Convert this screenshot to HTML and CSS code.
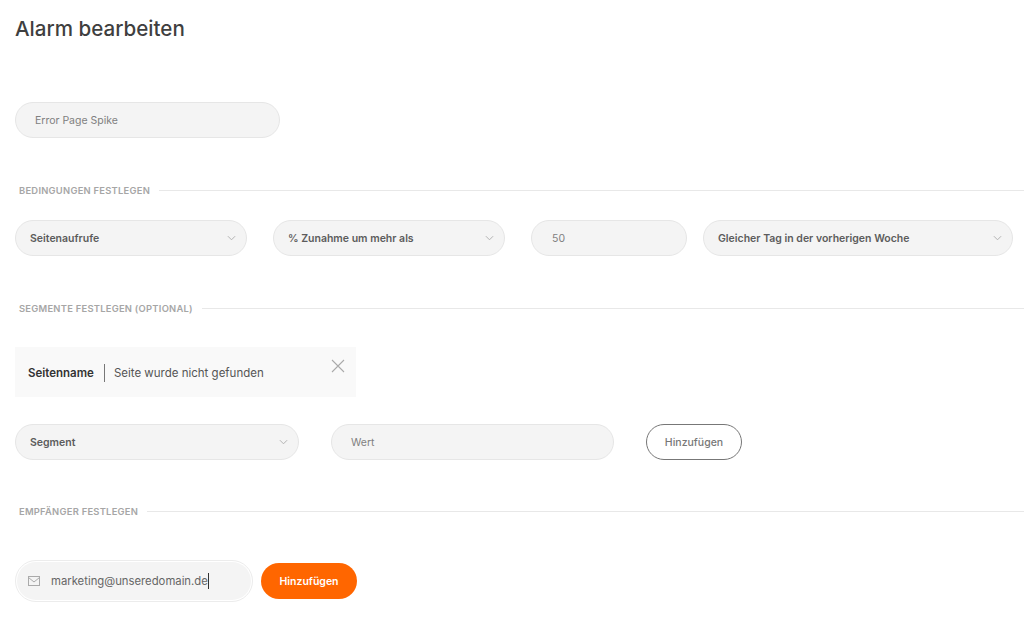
FILE: index.html
```html
<!DOCTYPE html>
<html lang="de">
<head>
<meta charset="utf-8">
<title>Alarm bearbeiten</title>
<link rel="stylesheet" href="styles.css">
</head>
<body>
<main class="page">
  <h1 class="title">Alarm bearbeiten</h1>
  <div class="field w-name name-row"><span class="ph">Error Page Spike</span></div>

  <div class="section-head s1"><span>BEDINGUNGEN FESTLEGEN</span><i></i></div>
  <div class="row cond">
    <div class="field select w-sel"><span>Seitenaufrufe</span><svg class="chev" viewBox="0 0 10 6"><path d="M1 1l4 4 4-4"/></svg></div>
    <div class="field select w-sel"><span>% Zunahme um mehr als</span><svg class="chev" viewBox="0 0 10 6"><path d="M1 1l4 4 4-4"/></svg></div>
    <div class="field w-num"><span class="ph num">50</span></div>
    <div class="field select w-day"><span>Gleicher Tag in der vorherigen Woche</span><svg class="chev" viewBox="0 0 10 6"><path d="M1 1l4 4 4-4"/></svg></div>
  </div>

  <div class="section-head s2"><span>SEGMENTE FESTLEGEN (OPTIONAL)</span><i></i></div>
  <div class="tag">
    <b>Seitenname</b><em></em><span>Seite wurde nicht gefunden</span>
    <svg class="close" viewBox="0 0 14 14"><path d="M1 1l12 12M13 1L1 13"/></svg>
  </div>
  <div class="row seg">
    <div class="field select w-seg"><span>Segment</span><svg class="chev" viewBox="0 0 10 6"><path d="M1 1l4 4 4-4"/></svg></div>
    <div class="field w-val"><span class="ph">Wert</span></div>
    <div class="btn-outline">Hinzufügen</div>
  </div>

  <div class="section-head s3"><span>EMPFÄNGER FESTLEGEN</span><i></i></div>
  <div class="row rec">
    <div class="mail-ring">
      <div class="mail">
        <svg class="env" viewBox="0 0 12 10"><rect x=".5" y=".5" width="11" height="9"/><path d="M.5 1.5L6 6l5.5-4.5"/></svg>
        <span class="addr">marketing@unseredomain.de</span><i class="caret"></i>
      </div>
    </div>
    <div class="btn-primary">Hinzufügen</div>
  </div>
</main>
</body>
</html>
```
FILE: styles.css
```css
* { box-sizing: border-box; }
html, body { margin: 0; height: 100%; background: #fff; overflow: hidden; }
body { font-family: Inter, Lato, sans-serif; color: #555; }
.page { padding: 15px 0 0 15px; }
.title { margin: 0; font-size: 20.6px; line-height: 28px; font-weight: 500; color: #3f3f3f; }
.name-row { margin-top: 59px; }
.row { display: flex; align-items: center; }
.field {
  height: 36px; border: 1px solid #e6e6e6; border-radius: 18px; background: #f4f4f4;
  display: flex; align-items: center; padding: 0 10px 0 14px; font-size: 10.5px; color: #5c5c5c;
  font-weight: 600; flex: none;
}
.ph { font-weight: 400; color: #808080; padding-left: 5px; }
.num { padding-left: 6px; }
.select { justify-content: space-between; }
.chev { width: 9px; height: 6px; fill: none; stroke: #aaa; stroke-width: 1; }
.w-name { width: 265px; }
.w-sel { width: 232px; margin-right: 26px; }
.w-num { width: 156px; margin-right: 16px; }
.w-day { width: 310px; }
.w-seg { width: 284px; margin-right: 32px; }
.w-val { width: 283px; margin-right: 32px; }
.section-head { display: flex; align-items: center; padding-left: 4px; height: 14px; font-size: 9.4px; font-weight: 600; color: #a6a6a6; letter-spacing: .25px; }
.section-head i { flex: 1; height: 1px; background: #e8e8e8; margin-left: 9px; }
.s1 { margin-top: 45px; }
.cond { margin-top: 23px; }
.s2 { margin-top: 45px; }
.tag { position: relative; margin-top: 32px; width: 341px; height: 50px; background: #f9f9f9; display: flex; align-items: center; padding: 1px 0 0 13px; font-size: 11.5px; color: #555; }
.tag b { color: #333; font-weight: 600; }
.tag em { width: 1px; height: 18px; background: #777; margin: 0 9px 0 10px; }
.close { position: absolute; right: 11px; top: 12px; width: 14px; height: 14px; fill: none; stroke: #aaa; stroke-width: 1.1; }
.seg { margin-top: 27px; }
.btn-outline { width: 96px; height: 36px; border: 1px solid #777; border-radius: 18px; display: flex; align-items: center; justify-content: center; font-size: 10.5px; color: #777; font-weight: 500; }
.s3 { margin-top: 44px; }
.rec { margin-top: 42px; }
.mail-ring { width: 238px; height: 42px; border: 1px solid #ececec; border-radius: 21px; padding: 1px; margin-right: 8px; }
.mail { height: 38px; border-radius: 19px; background: #f4f4f4; display: flex; align-items: center; padding-left: 11px; font-size: 11.3px; color: #666; }
.env { width: 12px; height: 10px; fill: none; stroke: #aaa; stroke-width: 1; margin-right: 11px; }
.caret { width: 1px; height: 16px; background: #333; }
.btn-primary { width: 96px; height: 36px; border-radius: 18px; background: #ff6600; color: #fff; font-size: 10.5px; font-weight: 600; display: flex; align-items: center; justify-content: center; }
```
